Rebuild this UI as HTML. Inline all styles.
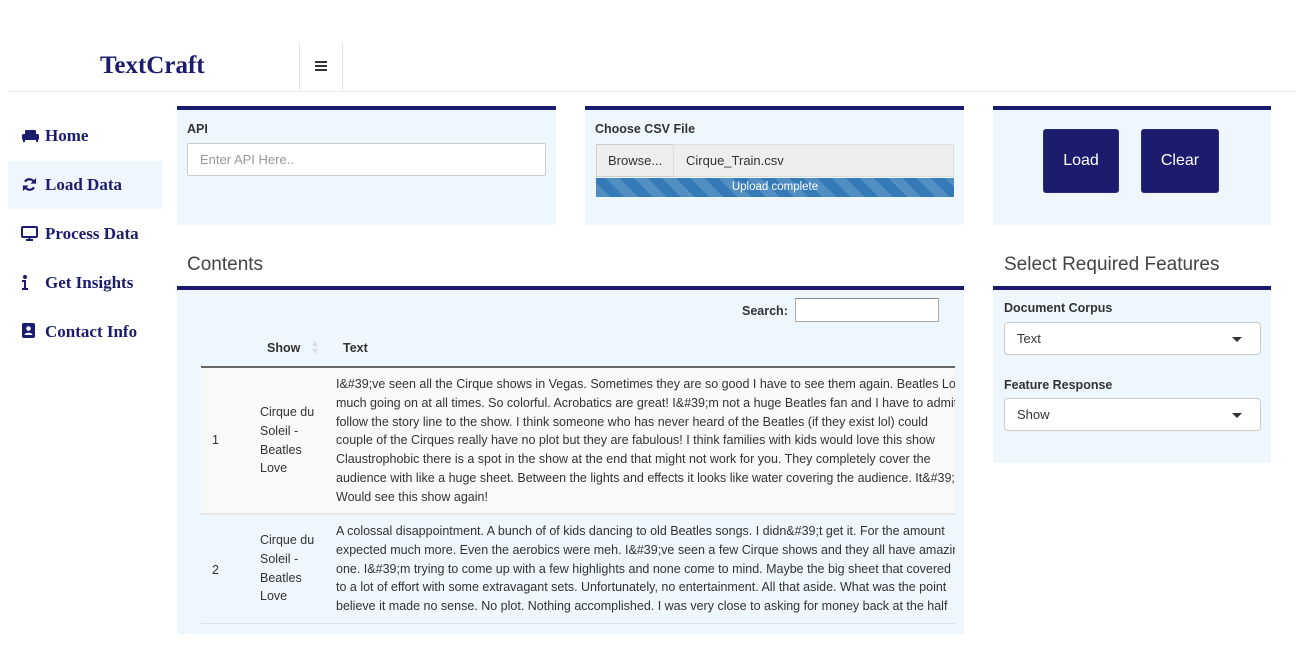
<!DOCTYPE html>
<html><head><style>
*{box-sizing:border-box;margin:0;padding:0}
body{width:1296px;height:657px;background:#fff;font-family:"Liberation Sans",sans-serif;color:#333;position:relative;overflow:hidden}
.a{position:absolute}
.nav{font-family:"Liberation Serif",serif;font-weight:bold;font-size:17px;color:#1c1c6e;left:45px}
.box{background:#eef6fe;border-top:4px solid #1a1a6e;border-radius:0 0 3px 3px}
.lbl{font-weight:bold;font-size:12.5px;color:#333}
.inp{background:#fff;border:1px solid #ccc;border-radius:2px}
.btn{background:#1c1c6e;color:#fff;font-size:16px;border-radius:3px;display:flex;align-items:center;justify-content:center;border:1px solid #2a2a80}
.t{font-size:12.5px;line-height:18.8px;white-space:nowrap;overflow:hidden;color:#333}
.caret{position:absolute;right:18px;top:14px;width:0;height:0;border-left:5px solid transparent;border-right:5px solid transparent;border-top:5px solid #333}
</style></head><body>
<div class="a" style="left:100px;top:52px;font-family:'Liberation Serif',serif;font-weight:bold;font-size:25px;color:#1c1c6e">TextCraft</div>
<div class="a" style="left:299px;top:42px;width:1px;height:49px;background:#e5e5e5"></div>
<div class="a" style="left:342px;top:42px;width:1px;height:49px;background:#e5e5e5"></div>
<div class="a" style="left:315px;top:61px;width:12px;height:2px;background:#333;box-shadow:0 4px 0 #333,0 8px 0 #333"></div>
<div class="a" style="left:8px;top:91px;width:1288px;height:1px;background:#eee"></div>

<div class="a" style="left:8px;top:161px;width:154px;height:48px;background:#eef6fe"></div>
<svg class="a" style="left:22px;top:130px" width="17" height="12" viewBox="0 0 17 12"><rect x="3" y="0" width="11" height="6" rx="1" fill="#1c1c6e"/><rect x="0" y="4" width="17" height="6" rx="1.5" fill="#1c1c6e"/><rect x="1" y="10" width="2" height="2" fill="#1c1c6e"/><rect x="14" y="10" width="2" height="2" fill="#1c1c6e"/></svg>
<div class="a nav" style="top:126px">Home</div>
<svg class="a" style="left:22px;top:177px" width="15" height="15" viewBox="0 0 16 16"><path d="M13 6A5.5 5.5 0 0 0 3.2 5M3 10a5.5 5.5 0 0 0 9.8 1" stroke="#1c1c6e" stroke-width="2.4" fill="none"/><path d="M15 1v6h-6zM1 15V9h6z" fill="#1c1c6e"/></svg>
<div class="a nav" style="top:175px">Load Data</div>
<svg class="a" style="left:21px;top:226px" width="17" height="15" viewBox="0 0 17 15"><rect x="1" y="1" width="15" height="10" rx="1" stroke="#1c1c6e" stroke-width="2" fill="none"/><rect x="5" y="13" width="7" height="2" fill="#1c1c6e"/><rect x="7.5" y="11" width="2" height="2" fill="#1c1c6e"/></svg>
<div class="a nav" style="top:224px">Process Data</div>
<svg class="a" style="left:22px;top:275px" width="6" height="15" viewBox="0 0 6 15"><circle cx="3" cy="2" r="2" fill="#1c1c6e"/><path d="M0 5h4v8h2v2H0v-2h2V7H0z" fill="#1c1c6e"/></svg>
<div class="a nav" style="top:273px">Get Insights</div>
<svg class="a" style="left:22px;top:323px" width="13" height="15" viewBox="0 0 13 15"><rect x="0" y="0" width="13" height="15" rx="2" fill="#1c1c6e"/><circle cx="6.5" cy="5.5" r="2.3" fill="#fff"/><path d="M2.5 12c0-3 8-3 8 0z" fill="#fff"/></svg>
<div class="a nav" style="top:322px">Contact Info</div>

<div class="a box" style="left:177px;top:106px;width:379px;height:119px"></div>
<div class="a lbl" style="left:187px;top:122px">API</div>
<div class="a inp" style="left:187px;top:143px;width:359px;height:33px;padding:8px 12px;font-size:13px;color:#999">Enter API Here..</div>

<div class="a box" style="left:585px;top:106px;width:379px;height:119px"></div>
<div class="a lbl" style="left:595px;top:122px">Choose CSV File</div>
<div class="a" style="left:596px;top:144px;width:78px;height:33px;background:#eee;border:1px solid #ccc;font-size:13px;padding:8px 11px">Browse...</div>
<div class="a" style="left:673px;top:144px;width:281px;height:33px;background:#eee;border:1px solid #ddd;font-size:13px;padding:8px 12px">Cirque_Train.csv</div>
<div class="a" style="left:596px;top:178px;width:358px;height:19px;background:#337ab7 repeating-linear-gradient(45deg,rgba(255,255,255,.15) 0 10px,transparent 10px 20px);color:#fff;font-size:11.5px;text-align:center;line-height:19px">Upload complete</div>

<div class="a box" style="left:993px;top:106px;width:278px;height:119px"></div>
<div class="a btn" style="left:1043px;top:129px;width:76px;height:64px">Load</div>
<div class="a btn" style="left:1141px;top:129px;width:78px;height:64px">Clear</div>

<div class="a" style="left:177px;top:248px;width:787px;height:38px;background:#fff"></div>
<div class="a" style="left:187px;top:254px;font-size:19px;color:#444">Contents</div>
<div class="a box" style="left:177px;top:286px;width:787px;height:348px"></div>
<div class="a lbl" style="left:742px;top:304px">Search:</div>
<div class="a" style="left:795px;top:298px;width:144px;height:24px;background:#fff;border:1px solid #aaa;border-top-color:#888"></div>
<div class="a lbl" style="left:267px;top:341px">Show</div>
<svg class="a" style="left:311px;top:340px" width="8" height="15"><path d="M4 1L7 6H1zM4 14L7 9H1z" fill="#ddd"/></svg>
<div class="a lbl" style="left:343px;top:341px">Text</div>
<div class="a" style="left:201px;top:366px;width:754px;height:2px;background:#666"></div>
<div class="a" style="left:201px;top:368px;width:754px;height:146px;background:#f9f9f9"></div>
<div class="a" style="left:201px;top:513px;width:754px;height:2px;background:#e8e8e8"></div>
<div class="a" style="left:201px;top:623px;width:754px;height:1px;background:#e0e0e0"></div>
<div class="a t" style="left:212px;top:431px">1</div>
<div class="a t" style="left:260px;top:403px;width:70px;white-space:normal">Cirque du<br>Soleil -<br>Beatles<br>Love</div>
<div class="a t" style="left:336px;top:375px;width:619px">I&amp;#39;ve seen all the Cirque shows in Vegas. Sometimes they are so good I have to see them again. Beatles Love is amazing<br>much going on at all times. So colorful. Acrobatics are great! I&amp;#39;m not a huge Beatles fan and I have to admit<br>follow the story line to the show. I think someone who has never heard of the Beatles (if they exist lol) could<br>couple of the Cirques really have no plot but they are fabulous! I think families with kids would love this show<br>Claustrophobic there is a spot in the show at the end that might not work for you. They completely cover the<br>audience with like a huge sheet. Between the lights and effects it looks like water covering the audience. It&amp;#39;s<br>Would see this show again!</div>
<div class="a t" style="left:212px;top:561px">2</div>
<div class="a t" style="left:260px;top:531px;width:70px;white-space:normal">Cirque du<br>Soleil -<br>Beatles<br>Love</div>
<div class="a t" style="left:336px;top:522px;width:619px">A colossal disappointment. A bunch of of kids dancing to old Beatles songs. I didn&amp;#39;t get it. For the amount<br>expected much more. Even the aerobics were meh. I&amp;#39;ve seen a few Cirque shows and they all have amazing<br>one. I&amp;#39;m trying to come up with a few highlights and none come to mind. Maybe the big sheet that covered<br>to a lot of effort with some extravagant sets. Unfortunately, no entertainment. All that aside. What was the point<br>believe it made no sense. No plot. Nothing accomplished. I was very close to asking for money back at the half</div>

<div class="a" style="left:993px;top:248px;width:278px;height:38px;background:#fff"></div>
<div class="a" style="left:1004px;top:254px;font-size:19px;color:#444">Select Required Features</div>
<div class="a box" style="left:993px;top:286px;width:278px;height:177px"></div>
<div class="a lbl" style="left:1004px;top:301px">Document Corpus</div>
<div class="a inp" style="left:1004px;top:322px;width:257px;height:33px;padding:8px 12px;font-size:13px;border-radius:4px">Text<span class="caret"></span></div>
<div class="a lbl" style="left:1004px;top:378px">Feature Response</div>
<div class="a inp" style="left:1004px;top:398px;width:257px;height:33px;padding:8px 12px;font-size:13px;border-radius:4px">Show<span class="caret"></span></div>
</body></html>
